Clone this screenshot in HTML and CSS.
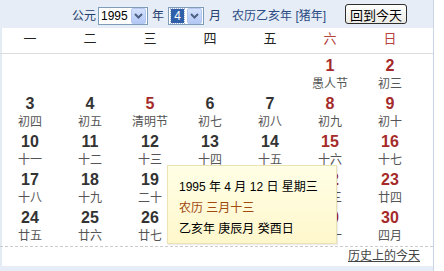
FILE: index.html
```html
<!DOCTYPE html>
<html lang="zh-CN">
<head>
    <meta charset="UTF-8">
    <title>万年历</title>
    <link rel="stylesheet" href="styles.css">
</head>
<body>
    <div class="cal">
        <div class="cal-head">
            <span class="lbl">公元</span>
            <div class="combo combo-year">
                <span class="combo-val">1995</span>
                <span class="combo-btn"><svg width="9" height="6" viewBox="0 0 9 6"><path d="M1 1 L4.5 4.5 L8 1" fill="none" stroke="#4d6185" stroke-width="2"/></svg></span>
            </div>
            <span class="lbl">年</span>
            <div class="combo combo-month">
                <span class="combo-val"><span class="picked">4</span></span>
                <span class="combo-btn"><svg width="9" height="6" viewBox="0 0 9 6"><path d="M1 1 L4.5 4.5 L8 1" fill="none" stroke="#4d6185" stroke-width="2"/></svg></span>
            </div>
            <span class="lbl">月</span>
            <span class="lunar-year">农历乙亥年 [猪年]</span>
            <button class="today-btn">回到今天</button>
        </div>

        <div class="week">
            <span>一</span>
            <span>二</span>
            <span>三</span>
            <span>四</span>
            <span>五</span>
            <span class="weekend">六</span>
            <span class="weekend">日</span>
        </div>

        <div class="days">
            <div class="day"></div>
            <div class="day"></div>
            <div class="day"></div>
            <div class="day"></div>
            <div class="day"></div>
            <div class="day red"><b>1</b><span>愚人节</span></div>
            <div class="day red"><b>2</b><span>初三</span></div>

            <div class="day"><b>3</b><span>初四</span></div>
            <div class="day"><b>4</b><span>初五</span></div>
            <div class="day red"><b>5</b><span>清明节</span></div>
            <div class="day"><b>6</b><span>初七</span></div>
            <div class="day"><b>7</b><span>初八</span></div>
            <div class="day red"><b>8</b><span>初九</span></div>
            <div class="day red"><b>9</b><span>初十</span></div>

            <div class="day"><b>10</b><span>十一</span></div>
            <div class="day"><b>11</b><span>十二</span></div>
            <div class="day"><b>12</b><span>十三</span></div>
            <div class="day"><b>13</b><span>十四</span></div>
            <div class="day"><b>14</b><span>十五</span></div>
            <div class="day red"><b>15</b><span>十六</span></div>
            <div class="day red"><b>16</b><span>十七</span></div>

            <div class="day"><b>17</b><span>十八</span></div>
            <div class="day"><b>18</b><span>十九</span></div>
            <div class="day"><b>19</b><span>二十</span></div>
            <div class="day"><b>20</b><span>廿一</span></div>
            <div class="day"><b>21</b><span>廿二</span></div>
            <div class="day red"><b>22</b><span>廿三</span></div>
            <div class="day red"><b>23</b><span>廿四</span></div>

            <div class="day"><b>24</b><span>廿五</span></div>
            <div class="day"><b>25</b><span>廿六</span></div>
            <div class="day"><b>26</b><span>廿七</span></div>
            <div class="day"><b>27</b><span>廿八</span></div>
            <div class="day"><b>28</b><span>廿九</span></div>
            <div class="day red"><b>29</b><span>三十</span></div>
            <div class="day red"><b>30</b><span>四月</span></div>

            <div class="tip">
                <div>1995 年 4 月 12 日 星期三</div>
                <div class="tip-lunar">农历 三月十三</div>
                <div>乙亥年 庚辰月 癸酉日</div>
            </div>
        </div>

        <div class="cal-foot">
            <a href="#">历史上的今天</a>
        </div>
    </div>
</body>
</html>
```

FILE: styles.css
```css
body {
    margin: 0;
    background-color: #ffffff;
    font-family: "Liberation Sans", "Noto Sans CJK SC", sans-serif;
}

.cal {
    width: 433px;
    background-color: #e6edf6; /* light blue frame */
    border-right: 1px solid #c8d6e8;
    padding-bottom: 5px;
}

/* top bar */
.cal-head {
    display: flex;
    align-items: center;
    height: 25px;
    padding: 3px 0 0 72px;
    font-size: 12px;
    color: #24406e;
}

.lbl {
    line-height: 16px;
}

.combo {
    display: flex;
    align-items: center;
    height: 16px;
    padding: 0 1px 0 2px;
    border: 1px solid #7f9db9;
    background-color: #ffffff;
    color: #000;
}

.combo-year {
    width: 45px;
    margin: 0 4px 0 2px;
}

.combo-month {
    width: 31px;
    margin: 0 5px 0 4px;
}

.combo-val {
    flex: 1;
    font-size: 12px;
    line-height: 14px;
}

.picked {
    display: inline-block;
    width: 13px;
    height: 14px;
    background-color: #2f5fa8;
    color: #ffffff;
    text-align: center;
    outline: 1px dotted #9db4d8;
}

.combo-btn {
    display: flex;
    align-items: center;
    justify-content: center;
    width: 13px;
    height: 14px;
    border: 1px solid #b5c8f0;
    border-radius: 2px;
    background: linear-gradient(#d4e1fc, #b3c8f6);
}

.lunar-year {
    margin-left: 11px;
    line-height: 16px;
    color: #2a4b84;
}

.today-btn {
    margin: -3px 0 0 19px;
    width: 62px;
    height: 20px;
    padding: 0;
    border: 1px solid #2e2e2e;
    border-radius: 3px;
    background: linear-gradient(#ffffff, #ecebe4);
    font-family: "Noto Sans CJK SC", sans-serif;
    font-size: 13px;
    line-height: 17px;
    color: #000;
}

/* weekday labels */
.week {
    display: grid;
    grid-template-columns: repeat(7, 60px);
    height: 25px;
    border-bottom: 1px solid #dcdcdc;
    background-color: #ffffff;
    box-shadow: inset 2px 0 #e2ecf2;
    font-size: 13px;
    line-height: 22px;
    text-align: center;
    color: #222;
}

.week .weekend {
    color: #b5423d;
}

/* date grid */
.days {
    position: relative;
    display: grid;
    grid-template-columns: repeat(7, 60px);
    grid-auto-rows: 38px;
    padding-top: 2px;
    background-color: #ffffff;
    box-shadow: inset 2px 0 #e2ecf2;
    text-align: center;
}

.day b {
    display: block;
    font-size: 16px;
    line-height: 20px;
    color: #333;
}

.day span {
    display: block;
    font-size: 12px;
    line-height: 16px;
    color: #555;
}

.day.red b {
    color: #a52a2a;
}

/* hover card for a date */
.tip {
    position: absolute;
    left: 167px;
    top: 111px;
    width: 170px;
    height: 79px;
    box-sizing: border-box;
    padding: 11px 0 0 11px;
    border: 1px solid #ebe3b4;
    background: linear-gradient(#ffffe6, #fff7cc);
    box-shadow: 1px 1px 1px rgba(0, 0, 0, 0.08);
    font-size: 12px;
    line-height: 21px;
    text-align: left;
    color: #000;
}

.tip-lunar {
    color: #a04a10;
}

/* bottom link */
.cal-foot {
    height: 19px;
    border-top: 1px dashed #cccccc;
    padding-right: 13px;
    background-color: #ffffff;
    box-shadow: inset 2px 0 #e2ecf2;
    text-align: right;
    font-size: 12px;
    line-height: 19px;
}

.cal-foot a {
    color: #444;
}
```
